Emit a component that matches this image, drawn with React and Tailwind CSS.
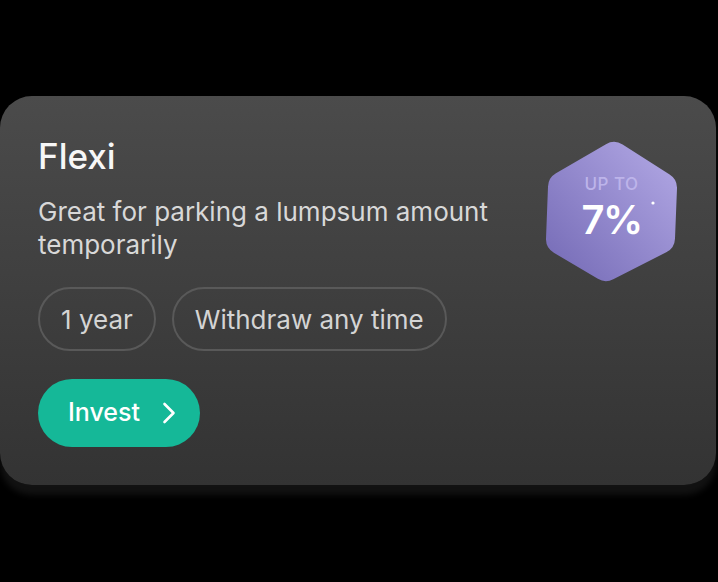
function Badge() {
  return (
    <div className="relative h-[141px] w-[131px]">
      <svg className="absolute inset-0" width="131" height="141" viewBox="0 0 131 141">
        <defs>
          <linearGradient id="hexFill" x1="1" y1="0" x2="0" y2="1">
            <stop offset="0" stopColor="#aca2e0" />
            <stop offset="1" stopColor="#7a70ba" />
          </linearGradient>
        </defs>
        <polygon
          points="68,17 115,47 113,97 60,124 16,98 18,46"
          fill="url(#hexFill)"
          stroke="url(#hexFill)"
          strokeWidth="32"
          strokeLinejoin="round"
        />
        <circle cx="107" cy="62" r="1.6" fill="#ffffff" />
      </svg>
      <div className="relative flex h-full flex-col items-center pt-[33px]">
        <span className="text-[17px] leading-[20px] font-medium tracking-[0.5px] text-[#bdb4ea]">UP TO</span>
        <span className="mt-[6px] text-[40px] leading-[40px] font-semibold tracking-[-1.5px] text-white">7%</span>
      </div>
    </div>
  );
}

function Chip({ children }) {
  return (
    <div className="flex h-[64px] items-center rounded-full border-2 border-[#595959] px-[21px] text-[26px] text-[#d4d4d4]">
      {children}
    </div>
  );
}

export default function App() {
  return (
    <div className="min-h-[582px] w-[718px] bg-black pt-[96px]" style={{ fontFamily: "Inter, 'Noto Sans', sans-serif" }}>
      <div className="relative h-[389px] w-[716px] rounded-[32px] bg-gradient-to-b from-[#4b4b4b] to-[#333333] shadow-[0_10px_6px_rgba(20,20,20,0.9)]">
        <div className="flex justify-between pr-[39px] pl-[38px]">
          <div className="pt-[40px]">
            <h1 className="text-[35px] leading-[40px] font-medium text-[#f7f7f7]">Flexi</h1>
            <p className="mt-[19px] w-[470px] text-[26px] leading-[33px] text-[#d8d8d8]">
              Great for parking a lumpsum amount temporarily
            </p>
            <div className="mt-[26px] flex gap-[16px]">
              <Chip>1 year</Chip>
              <Chip>Withdraw any time</Chip>
            </div>
            <button className="mt-[28px] flex h-[68px] w-[162px] items-center rounded-full bg-[#15b898] pl-[30px] text-[25px] font-medium text-white">
              Invest
              <svg className="ml-[22px]" width="14" height="22" viewBox="0 0 14 22">
                <path d="M2.5 2 L11.5 11 L2.5 20" fill="none" stroke="#ffffff" strokeWidth="2.6" strokeLinecap="round" strokeLinejoin="round" />
              </svg>
            </button>
          </div>
          <div className="pt-[45px]">
            <Badge />
          </div>
        </div>
      </div>
    </div>
  );
}
